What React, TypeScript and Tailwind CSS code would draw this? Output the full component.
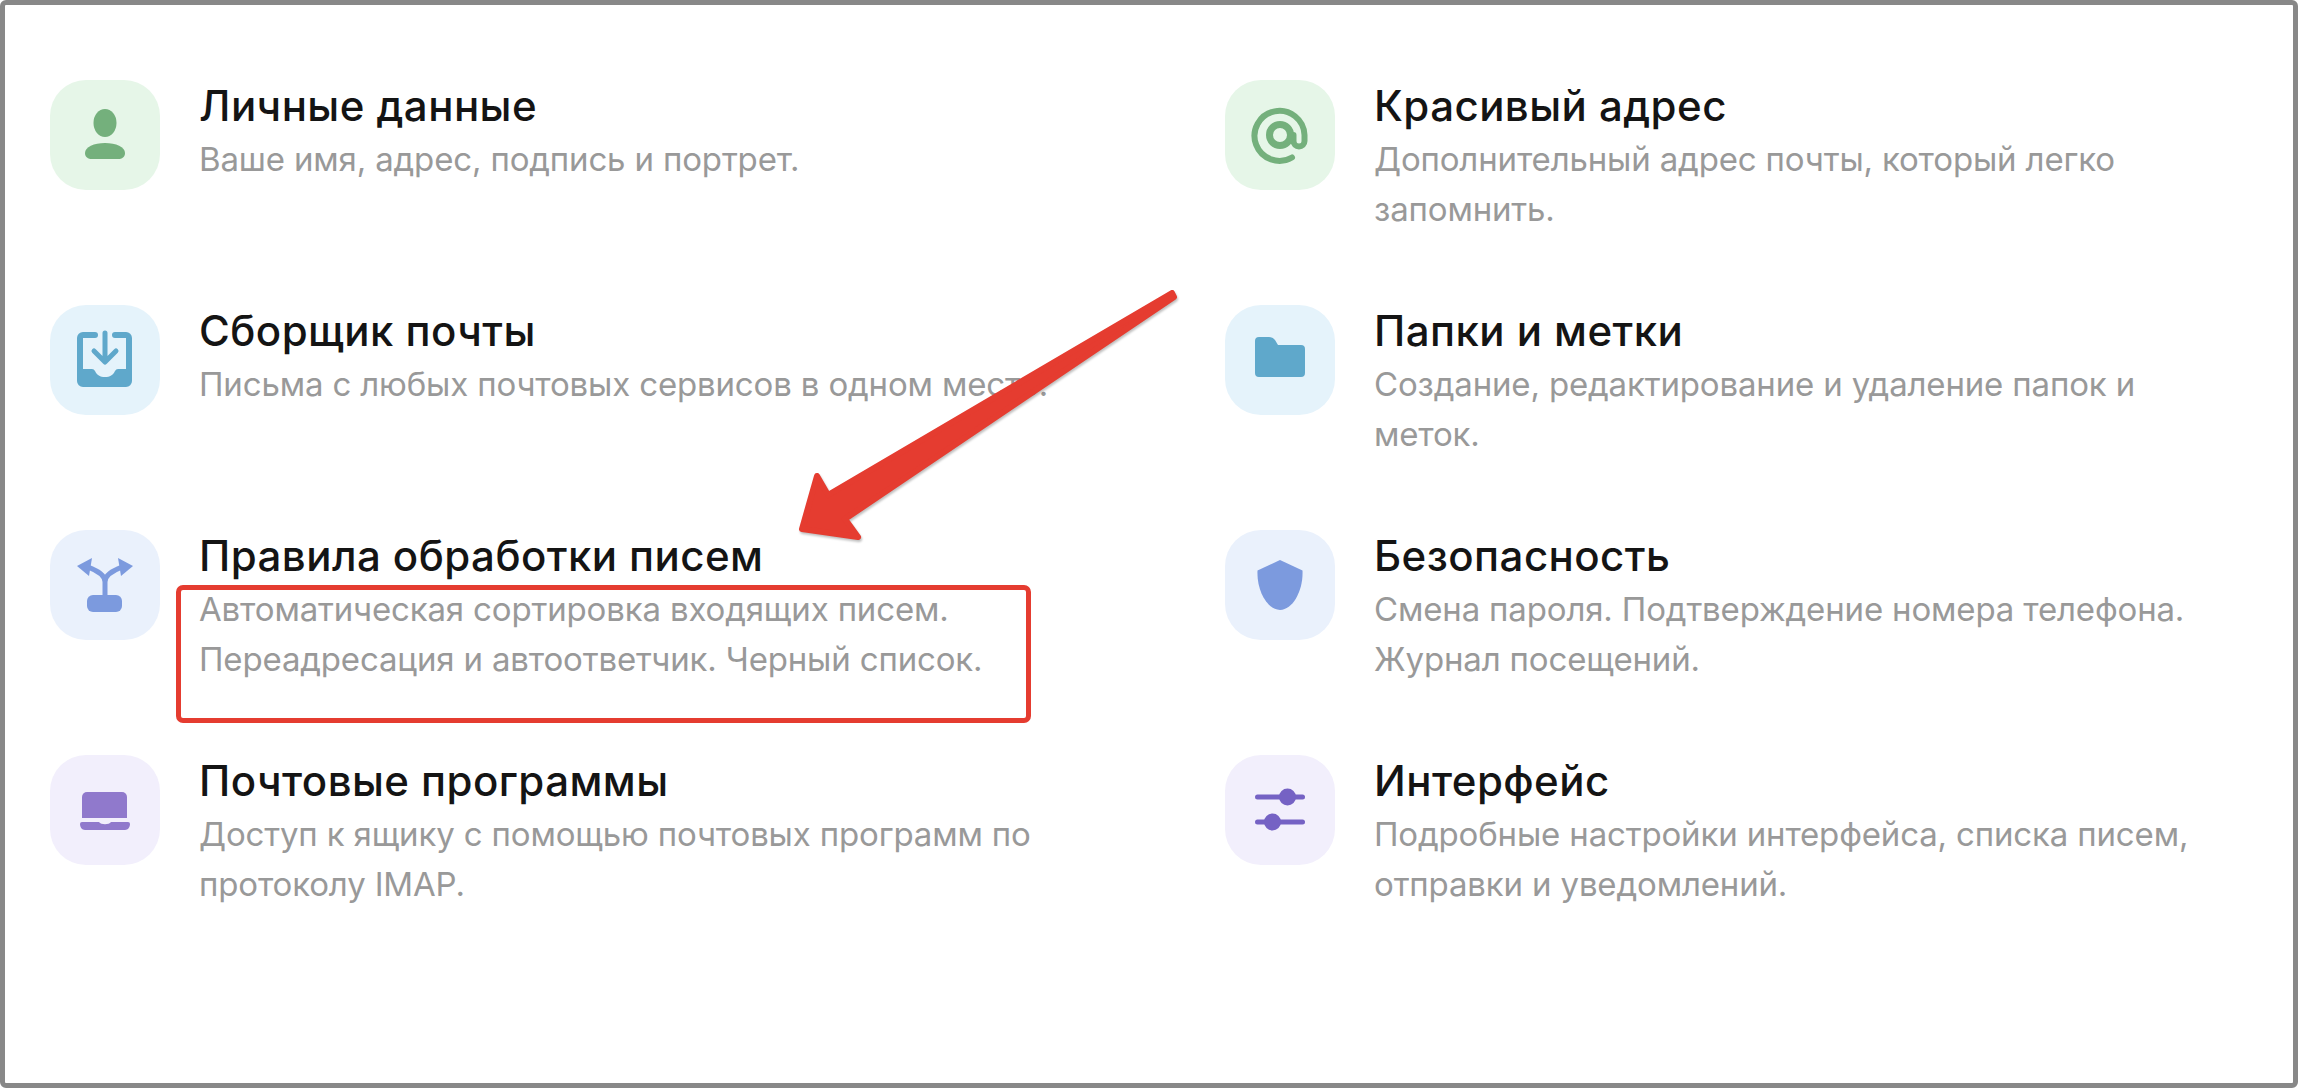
import type { ReactNode } from "react"

interface Setting {
  title: string
  lines: string[]
  tile: string
  icon: ReactNode
}

const green = "#74b07c"
const blue = "#5fa8cb"
const periwinkle = "#7c9ade"
const purple = "#9079cc"
const violet = "#7562c4"

const settings: Setting[] = [
  {
    title: "Личные данные",
    lines: ["Ваше имя, адрес, подпись и портрет."],
    tile: "bg-[#e6f6e8]",
    icon: (
      <g fill={green}>
        <ellipse cx="55" cy="43" rx="11.5" ry="14" />
        <path d="M35 73C35 67 44 63 55 63C66 63 75 67 75 73C75 77 72 79 68 79H42C38 79 35 77 35 73Z" />
      </g>
    ),
  },
  {
    title: "Красивый адрес",
    lines: ["Дополнительный адрес почты, который легко", "запомнить."],
    tile: "bg-[#e6f6e8]",
    icon: (
      <g fill="none" stroke={green}>
        <path strokeWidth="6" strokeLinecap="round" d="M67 77.5A25 25 0 1 1 79.5 55V61A5.5 5.5 0 0 1 68.5 61V55" />
        <circle cx="55" cy="55" r="10.5" strokeWidth="7" />
      </g>
    ),
  },
  {
    title: "Сборщик почты",
    lines: ["Письма с любых почтовых сервисов в одном месте."],
    tile: "bg-[#e5f3fb]",
    icon: (
      <g fill={blue}>
        <path d="M45 27H33a6 6 0 0 0-6 6V76a6 6 0 0 0 6 6H76a6 6 0 0 0 6-6V33a6 6 0 0 0-6-6H65a3 3 0 0 0 0 6H76V64H68Q66 64 65 66C63 70 60 72 55 72C50 72 47 70 45 66Q44 64 42 64H33V33H45a3 3 0 0 0 0-6Z" />
        <path d="M55 28V56M44 46L55 57L66 46" fill="none" stroke={blue} strokeWidth="5" strokeLinecap="round" strokeLinejoin="round" />
      </g>
    ),
  },
  {
    title: "Папки и метки",
    lines: ["Создание, редактирование и удаление папок и", "меток."],
    tile: "bg-[#e5f3fb]",
    icon: <path fill={blue} d="M34 32H44Q48 32 50 35L53 40H76a4 4 0 0 1 4 4V68a4 4 0 0 1-4 4H34a4 4 0 0 1-4-4V36a4 4 0 0 1 4-4Z" />,
  },
  {
    title: "Правила обработки писем",
    lines: ["Автоматическая сортировка входящих писем.", "Переадресация и автоответчик. Черный список."],
    tile: "bg-[#eaf1fc]",
    icon: (
      <g fill={periwinkle}>
        <rect x="37" y="65" width="35" height="17" rx="6" />
        <path d="M55 66V52C55 45 48 41 38 37M55 52C55 45 62 41 72 37" fill="none" stroke={periwinkle} strokeWidth="5" />
        <path d="M27 36L42 28L39 46Z" />
        <path d="M83 36L68 28L71 46Z" />
      </g>
    ),
  },
  {
    title: "Безопасность",
    lines: ["Смена пароля. Подтверждение номера телефона.", "Журнал посещений."],
    tile: "bg-[#eaf1fc]",
    icon: <path fill={periwinkle} d="M55 30L77.5 40.5C78.500 60 68 80 55 80C42 80 31.500 60 32.500 40.500Z" />,
  },
  {
    title: "Почтовые программы",
    lines: ["Доступ к ящику с помощью почтовых программ по", "протоколу IMAP."],
    tile: "bg-[#f2effc]",
    icon: (
      <g fill={purple}>
        <path d="M37 37H72a5 5 0 0 1 5 5V63H32V42a5 5 0 0 1 5-5Z" />
        <path d="M32 67H49C51 70 59 70 61 67H78a2 2 0 0 1 2 2C80 72 78 75 75 75H35C32 75 30 72 30 69a2 2 0 0 1 2-2Z" />
      </g>
    ),
  },
  {
    title: "Интерфейс",
    lines: ["Подробные настройки интерфейса, списка писем,", "отправки и уведомлений."],
    tile: "bg-[#f2effc]",
    icon: (
      <g fill={violet}>
        <rect x="30" y="39.500" width="50" height="5" rx="2.500" />
        <circle cx="62.500" cy="42" r="8.500" />
        <rect x="30" y="64.500" width="50" height="5" rx="2.500" />
        <circle cx="47.500" cy="67" r="8.500" />
      </g>
    ),
  },
]

function SettingRow({ item }: { item: Setting }) {
  return (
    <div className="flex gap-[39px]">
      <div className={`w-[110px] h-[110px] rounded-[36px] shrink-0 ${item.tile}`}>
        <svg width="110" height="110" viewBox="0 0 110 110">{item.icon}</svg>
      </div>
      <div className="-mt-[2px]">
        <div className="text-[42px] leading-[56px] font-medium text-[#141414] tracking-[0.45px] whitespace-nowrap">{item.title}</div>
        <div className="text-[33px] leading-[50px] text-[#999999] tracking-[-0.16px] whitespace-nowrap">
          {item.lines.map(line => (
            <div key={line}>{line}</div>
          ))}
        </div>
      </div>
    </div>
  )
}

export default function App() {
  return (
    <div className="relative w-[2298px] h-[1088px] bg-white font-['Inter',sans-serif] overflow-hidden">
      <div className="h-full border-[5px] border-[#888888] rounded-[6px] pt-[75px] pl-[45px] grid grid-cols-[1175px_1fr] auto-rows-[225px]">
        {settings.map(item => (
          <SettingRow key={item.title} item={item} />
        ))}
      </div>

      {/* Annotation: box around the rule description */}
      <div className="absolute left-[176px] top-[585px] w-[855px] h-[138px] border-[5px] border-[#e53c30] rounded-[7px]" />

      {/* Annotation: arrow */}
      <svg className="absolute left-0 top-0 drop-shadow-[1px_2px_1px_rgba(0,0,0,0.25)]" width="2298" height="1088" viewBox="0 0 2298 1088">
        <path
          d="M1172 293L1174 297L845 519L858 537L802 529L817 476L828 495Z"
          fill="#e53c30"
          stroke="#e53c30"
          strokeWidth="6"
          strokeLinejoin="round"
        />
      </svg>
    </div>
  )
}
